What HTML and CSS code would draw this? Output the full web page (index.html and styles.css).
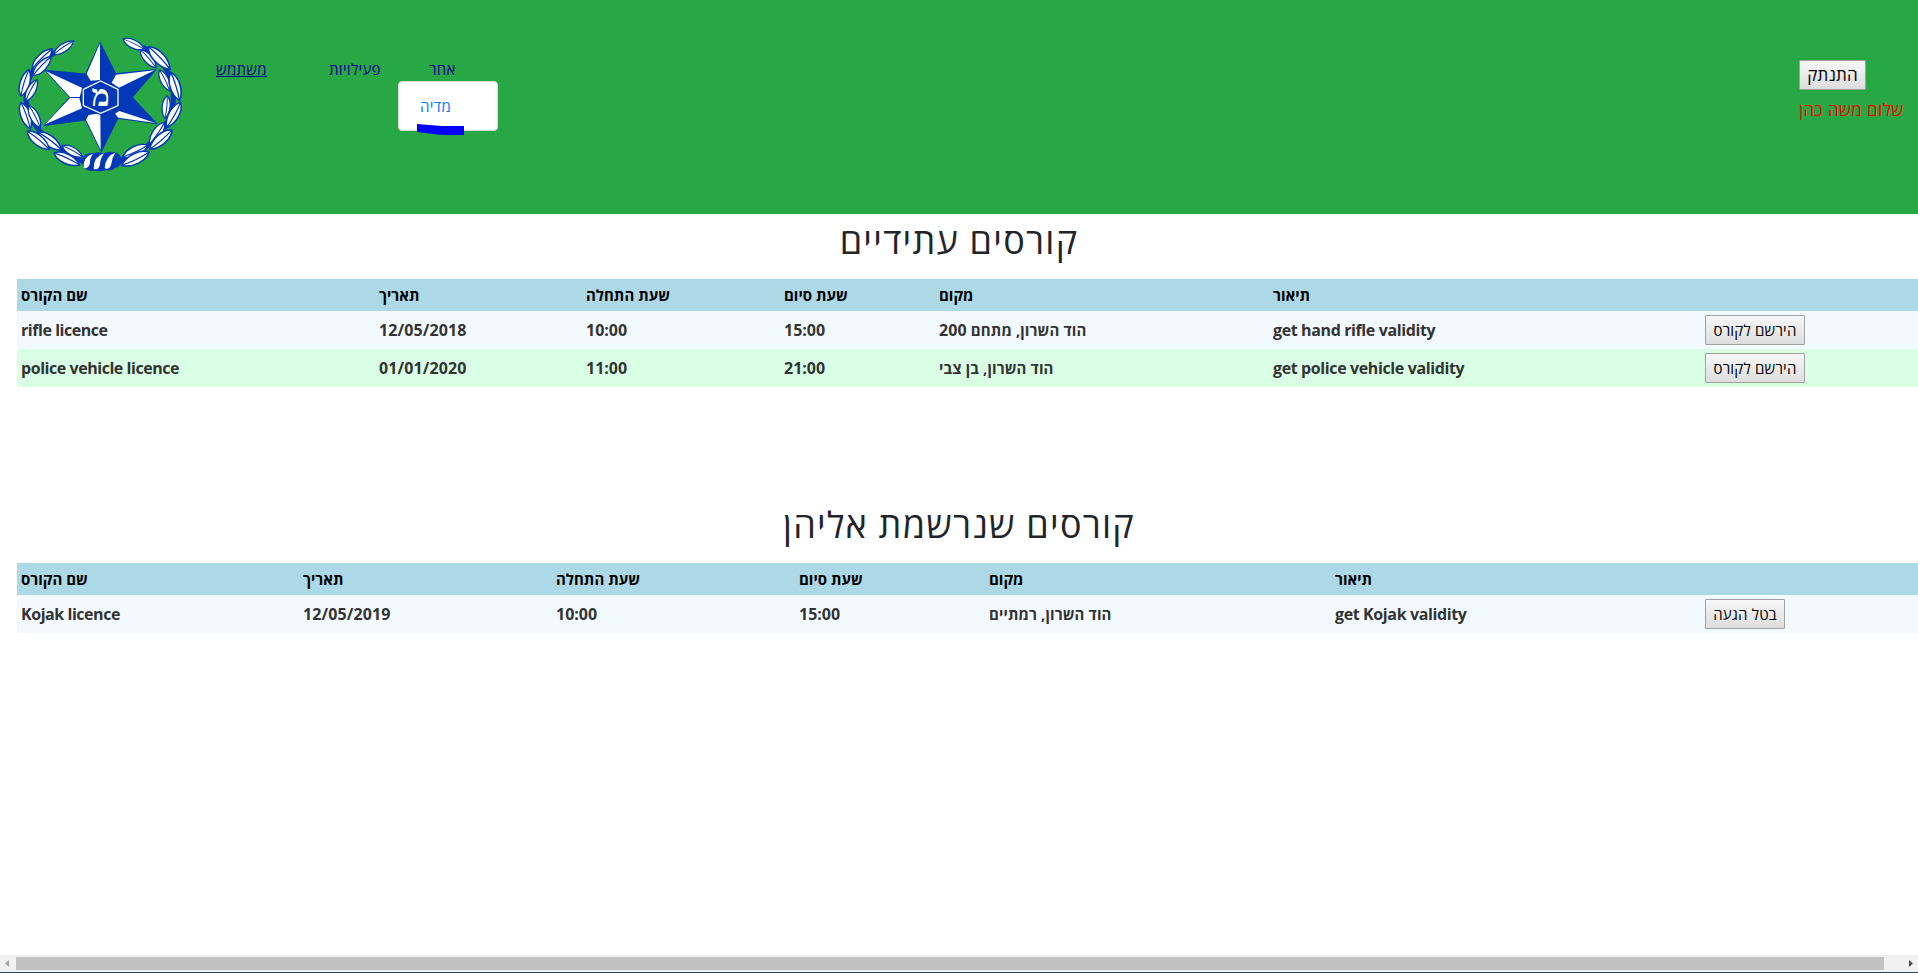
FILE: index.html
```html
<!DOCTYPE html>
<html lang="he">
<head>
<meta charset="utf-8">
<title>קורסים</title>
<link rel="stylesheet" href="styles.css">
</head>
<body>
<header class="top">
  <svg class="logo" viewBox="0 0 600 510">
    <defs>
      <g id="leaf">
        <path d="M3 0C22-21 70-22 97 0C70 22 22 21 3 0Z" fill="#fff" stroke="#0038b8" stroke-width="5"/>
        <path d="M4 0C40-5 70-3 96 0" fill="none" stroke="#0038b8" stroke-width="4"/>
      </g>
    </defs>
    <g fill="none" stroke="#0038b8" stroke-width="15" stroke-linecap="round">
      <path d="M165 98Q100 130 84 185T92 290Q125 365 250 425"/>
      <path d="M432 84Q500 125 514 185T510 290Q470 380 360 425"/>
    </g>
    <use href="#leaf" transform="translate(160 104) rotate(-34) scale(.76)"/>
    <use href="#leaf" transform="translate(95 148) rotate(-45) scale(.9)"/>
    <use href="#leaf" transform="translate(98 168) rotate(-46.5) scale(.83)"/>
    <use href="#leaf" transform="translate(62 230) rotate(-73) scale(.88)"/>
    <use href="#leaf" transform="translate(76 245) rotate(-62) scale(.78)"/>
    <use href="#leaf" transform="translate(62 245) rotate(70.5) scale(.9)"/>
    <use href="#leaf" transform="translate(86 255) rotate(63) scale(.79)"/>
    <use href="#leaf" transform="translate(112 335) rotate(37) scale(.94)"/>
    <use href="#leaf" transform="translate(80 332) rotate(39.6) scale(.91)"/>
    <use href="#leaf" transform="translate(185 376) rotate(29) scale(.74)"/>
    <use href="#leaf" transform="translate(160 398) rotate(25) scale(.9)"/>
    <use href="#leaf" transform="translate(367 56) rotate(26) scale(.76)"/>
    <use href="#leaf" transform="translate(420 88) rotate(49) scale(.76)"/>
    <use href="#leaf" transform="translate(443 78) rotate(46) scale(1)"/>
    <use href="#leaf" transform="translate(478 148) rotate(64.5) scale(.74)"/>
    <use href="#leaf" transform="translate(512 155) rotate(73) scale(.94)"/>
    <use href="#leaf" transform="translate(502 225) rotate(96) scale(.73)"/>
    <use href="#leaf" transform="translate(543 245) rotate(119) scale(.92)"/>
    <use href="#leaf" transform="translate(495 305) rotate(124.5) scale(.85)"/>
    <use href="#leaf" transform="translate(518 328) rotate(139) scale(.94)"/>
    <use href="#leaf" transform="translate(445 375) rotate(155) scale(.88)"/>
    <use href="#leaf" transform="translate(450 395) rotate(154) scale(.98)"/>
    <path d="M250 410Q262 396 280 400Q296 394 311 400Q328 392 345 397Q362 402 366 420Q362 442 345 444Q333 455 318 450Q305 456 286 452Q268 455 254 446Q242 430 250 410Z" fill="#0038b8"/>
    <g fill="#fff">
      <path d="M251 444Q248 410 279 401Q269 415 270 430Q265 448 251 444Z"/>
      <path d="M281 447Q280 410 312 400Q299 420 300 434Q295 452 281 447Z"/>
      <path d="M314 445Q316 408 346 398Q335 415 334 432Q330 450 314 445Z"/>
    </g>
    <path d="M300 67L347 161L468 149L397 232L471 311L354 295L304 395L256 300L132 317L209 232L135 151L257 162Z" fill="#0038b8" stroke="#0038b8" stroke-width="3"/>
    <g fill="#fff">
      <path d="M300 70L260 162L272 182L300 180Z"/>
      <path d="M464 151L348 164L335 188L357 203Z"/>
      <path d="M467 309L355 293L345 281L358 273Z"/>
      <path d="M302 389L258 299L266 285L301 280Z"/>
      <path d="M136 313L210 234L238 234L246 265Z"/>
      <path d="M139 154L247 204L239 231L210 231Z"/>
    </g>
    <path d="M302 179L359 205V260L302 286L245 260V205Z" fill="#0038b8"/>
    <path d="M302 183L354 208V257L302 280L250 257V208Z" fill="#0038b8" stroke="#fff" stroke-width="4"/>
    <text class="logo-letter" x="302" y="257" text-anchor="middle">מ</text>
  </svg>
  <nav class="menu">
    <a class="item user">משתמש</a>
    <a class="item acts">פעילויות</a>
    <div class="item other">אחר
      <div class="drop"><span>מדיה</span>
        <svg class="mark" viewBox="0 0 47 11"><path d="M0 0L25 2H47V11H25L0 8Z" fill="#00f"/></svg>
      </div>
    </div>
  </nav>
  <div class="account">
    <button class="btn logout">התנתק</button>
    <div class="hello">שלום משה כהן</div>
  </div>
</header>
<main>
  <h1 class="h-one"><span>קורסים עתידיים</span></h1>
  <table>
    <colgroup><col style="width:358px"><col style="width:207px"><col style="width:198px"><col style="width:155px"><col style="width:334px"><col style="width:432px"><col></colgroup>
    <tr class="head"><th>שם הקורס</th><th>תאריך</th><th>שעת התחלה</th><th>שעת סיום</th><th>מקום</th><th>תיאור</th><th></th></tr>
    <tr class="odd"><td class="name">rifle licence</td><td class="date">12/05/2018</td><td>10:00</td><td>15:00</td><td class="he">הוד השרון, מתחם <span class="num">200</span></td><td class="desc">get hand rifle validity</td><td><button class="btn join">הירשם לקורס</button></td></tr>
    <tr class="even"><td class="name">police vehicle licence</td><td class="date">01/01/2020</td><td>11:00</td><td>21:00</td><td class="he">הוד השרון, בן צבי</td><td class="desc">get police vehicle validity</td><td><button class="btn join">הירשם לקורס</button></td></tr>
  </table>
  <h1 class="h-two"><span>קורסים שנרשמת אליהן</span></h1>
  <table>
    <colgroup><col style="width:282px"><col style="width:253px"><col style="width:243px"><col style="width:190px"><col style="width:346px"><col style="width:370px"><col></colgroup>
    <tr class="head"><th>שם הקורס</th><th>תאריך</th><th>שעת התחלה</th><th>שעת סיום</th><th>מקום</th><th>תיאור</th><th></th></tr>
    <tr class="odd"><td class="name">Kojak licence</td><td class="date">12/05/2019</td><td>10:00</td><td>15:00</td><td class="he">הוד השרון, רמתיים</td><td class="desc">get Kojak validity</td><td><button class="btn cancel">בטל הגעה</button></td></tr>
  </table>
</main>
<footer class="scroll">
  <svg class="arrow" viewBox="0 0 16 17"><path d="M9 5V12L5 8.5Z" fill="#a3a3a3"/></svg>
  <div class="thumb"></div>
  <svg class="arrow right" viewBox="0 0 16 17"><path d="M7 5V12L11 8.5Z" fill="#505050"/></svg>
</footer>
</body>
</html>
```
FILE: styles.css
```css
* { box-sizing: border-box; }
body {
  margin: 0;
  height: 973px;
  overflow: hidden;
  display: flex;
  flex-direction: column;
  background: #fff;
  color: #212529;
  font: 16px/24px "Open Sans", "Noto Sans", "DejaVu Sans", sans-serif;
}
.top {
  height: 214px;
  background: #28a745;
  display: flex;
  align-items: flex-start;
}
.logo { width: 200px; height: 170px; margin-top: 20px; }
.logo-letter { font: bold 92px "Liberation Serif", serif; fill: #fff; }
.menu { display: flex; padding: 57px 0 0 16px; color: #00008b; font-size: 15px; letter-spacing: .3px; white-space: nowrap; }
.user { width: 113px; text-decoration: underline; }
.acts { width: 100px; }
.other { position: relative; }
.drop {
  position: absolute;
  left: -31px;
  top: 24px;
  width: 100px;
  height: 50px;
  padding: 12px 21px;
  background: #fff;
  border: 1px solid #d4dcd5;
  border-radius: 4px;
  color: #007bff;
}
.mark { position: absolute; left: 18px; top: 42px; width: 47px; height: 11px; }
.account { margin-left: auto; width: 119px; padding-top: 60px; white-space: nowrap; }
.btn {
  display: block;
  height: 30px;
  padding: 0;
  border: 1px solid #a0a0a0;
  border-radius: 1px;
  background: linear-gradient(#f7f7f7, #dddddd);
  color: #000;
  font: 15px/26px "Open Sans", "Noto Sans", sans-serif;
  letter-spacing: .2px;
  white-space: nowrap;
}
.logout { width: 67px; font-size: 17px; }
.join { width: 100px; }
.cancel { width: 80px; }
.hello { margin-top: 8px; color: #f00; font-size: 17px; letter-spacing: .35px; }
main { flex: 1; }
h1 {
  margin: 0;
  font-size: 36px;
  line-height: 48px;
  font-weight: 400;
  letter-spacing: 1.25px;
  text-align: center;
}
.h-one { padding: 3px 0 14px; }
.h-two { padding: 114px 0 14px; }
table {
  width: 1901px;
  margin-left: 17px;
  table-layout: fixed;
  border-collapse: collapse;
}
th, td { padding: 0 4px; text-align: left; font-weight: 700; white-space: nowrap; }
th { height: 32px; color: #000; font-size: 15px; }
td { height: 38px; color: #333; }
.name { letter-spacing: -.45px; }
.desc { letter-spacing: -.38px; }
.date { letter-spacing: .12px; }
.he { font-size: 15px; letter-spacing: .12px; }
.num { font-size: 16px; }
.head { background: #add8e6; }
.odd { background: #f3faff; }
.even { background: #d9ffe4; }
.scroll {
  height: 18px;
  display: flex;
  background: #f1f1f1;
  border-bottom: 1px solid #24465c;
}
.arrow { width: 16px; height: 17px; }
.thumb { width: 1868px; height: 13px; margin-top: 2px; background: #c1c1c1; }
.right { margin-left: auto; }
```
